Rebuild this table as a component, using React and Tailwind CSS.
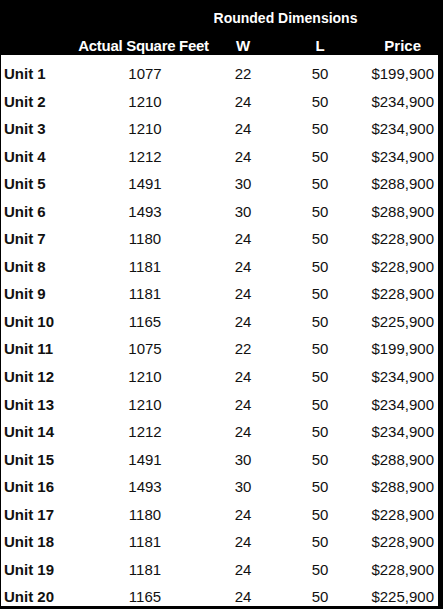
import React from 'react';

const units = [
  ['Unit 1', 1077, 22, 50, '$199,900'],
  ['Unit 2', 1210, 24, 50, '$234,900'],
  ['Unit 3', 1210, 24, 50, '$234,900'],
  ['Unit 4', 1212, 24, 50, '$234,900'],
  ['Unit 5', 1491, 30, 50, '$288,900'],
  ['Unit 6', 1493, 30, 50, '$288,900'],
  ['Unit 7', 1180, 24, 50, '$228,900'],
  ['Unit 8', 1181, 24, 50, '$228,900'],
  ['Unit 9', 1181, 24, 50, '$228,900'],
  ['Unit 10', 1165, 24, 50, '$225,900'],
  ['Unit 11', 1075, 22, 50, '$199,900'],
  ['Unit 12', 1210, 24, 50, '$234,900'],
  ['Unit 13', 1210, 24, 50, '$234,900'],
  ['Unit 14', 1212, 24, 50, '$234,900'],
  ['Unit 15', 1491, 30, 50, '$288,900'],
  ['Unit 16', 1493, 30, 50, '$288,900'],
  ['Unit 17', 1180, 24, 50, '$228,900'],
  ['Unit 18', 1181, 24, 50, '$228,900'],
  ['Unit 19', 1181, 24, 50, '$228,900'],
  ['Unit 20', 1165, 24, 50, '$225,900'],
];

const cols = 'grid grid-cols-[96px_96px_100px_54px_1fr]';

export default function App() {
  return (
    <div className="w-[443px] h-[609px] bg-black pl-[1px] pr-[5px] pb-[3px] font-['Liberation_Sans',Arial,sans-serif] overflow-hidden">
      {/* Header */}
      <div className="h-[55px] text-white font-bold">
        <div className={`${cols} h-[28px] pt-[11px]`}>
          <div className="col-start-3 col-span-2 flex justify-center whitespace-nowrap text-[14px] leading-none pl-[31px]">
            Rounded Dimensions
          </div>
        </div>
        <div className={`${cols} text-[15px] leading-none pt-[10px]`}>
          <div />
          <div className="flex justify-center whitespace-nowrap tracking-[-0.3px] pr-[3px]">Actual Square Feet</div>
          <div className="text-center">W</div>
          <div className="text-center">L</div>
          <div className="text-right pr-[17px]">Price</div>
        </div>
      </div>

      {/* Rows */}
      <div className="bg-white text-[#111] text-[15px] leading-none">
        {units.map(([name, sqft, w, l, price]) => (
          <div key={name} className={`${cols} h-[27.55px] pt-[11px]`}>
            <div className="font-bold pl-[3px] whitespace-nowrap">{name}</div>
            <div className="text-center">{sqft}</div>
            <div className="text-center">{w}</div>
            <div className="text-center">{l}</div>
            <div className="text-right pr-[4px]">{price}</div>
          </div>
        ))}
      </div>
    </div>
  );
}
